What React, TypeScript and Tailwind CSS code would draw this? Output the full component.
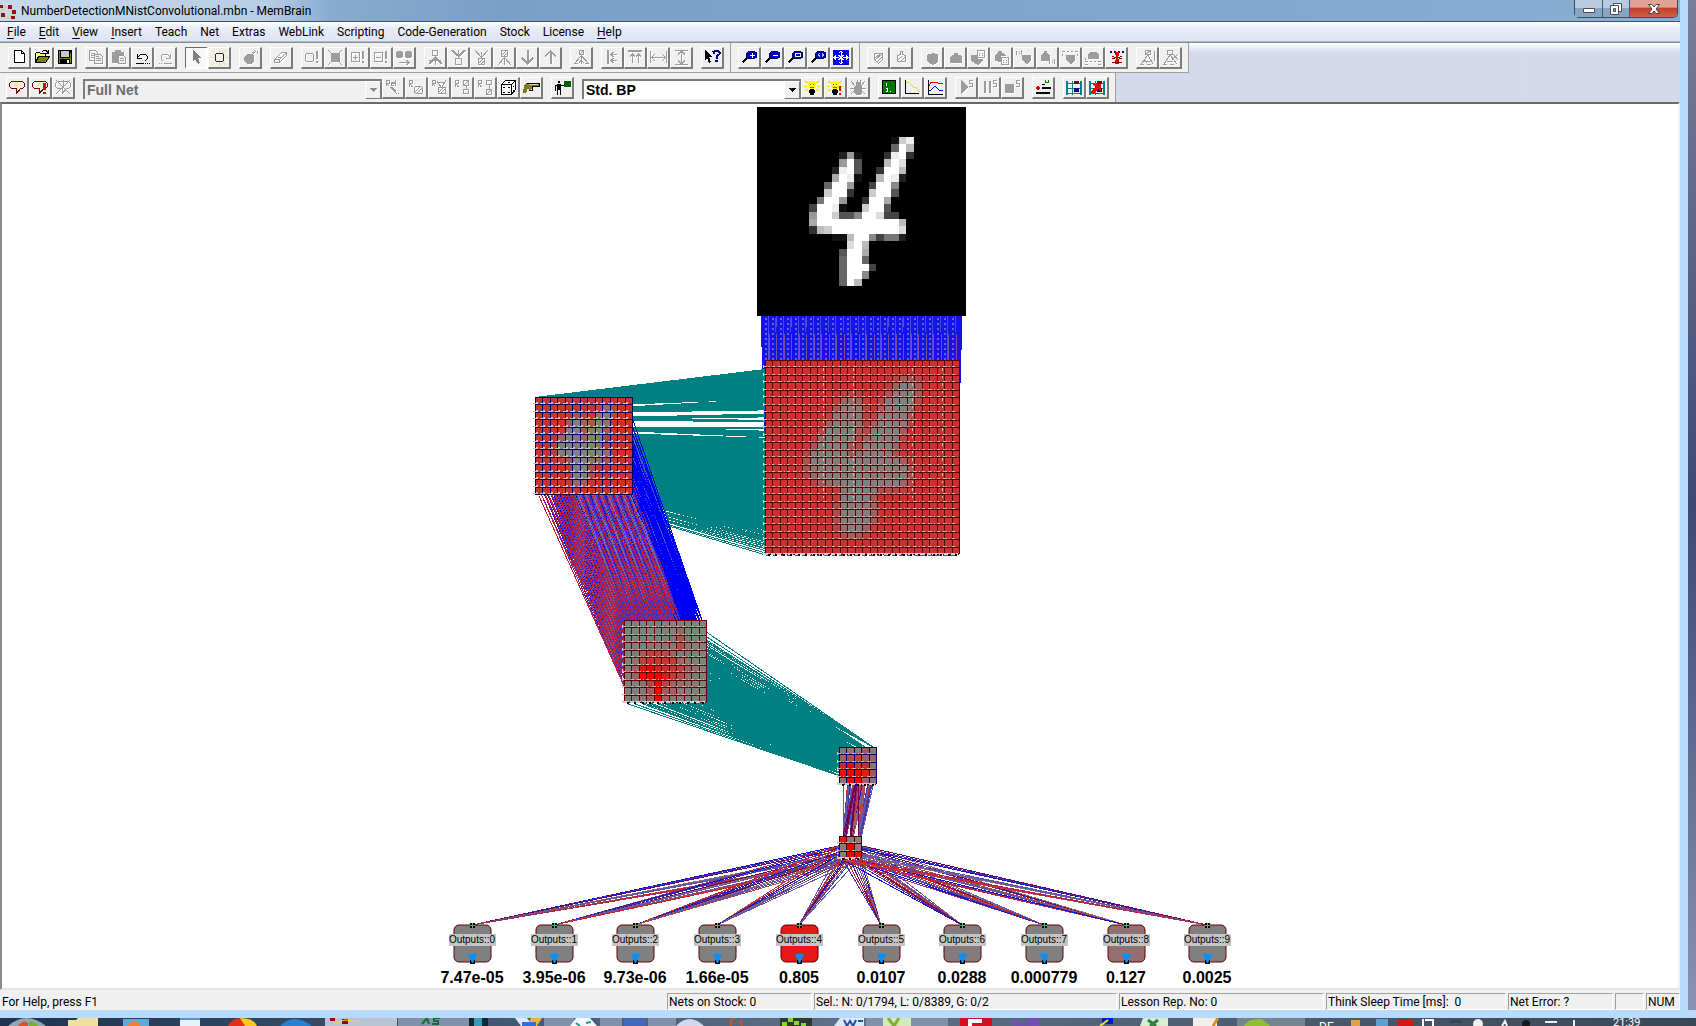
import React from "react";

type Shape = { d: string; s?: string; f?: string; w?: number };

const K = "#000000";
const G = "#9c9c9c";
const M = "#800000";
const Y = "#ffff00";
const B = "#0000e0";
const R = "#e00000";
const T = "#008080";

// s = stroked shape, f = filled shape
const s = (d: string, color = G, w = 1): Shape => ({ d, s: color, w });
const f = (d: string, color = G): Shape => ({ d, f: color });

const SHIELD = "M3 5l2-1h2l1-1h2l1 1h2l1 1v6l-3 3-2 1-2-1-4-3z";
const DOME = "M3 13V7l2-2h2V3h4v2h2l2 2v6z";
const LENS = [f("M6 2h2V1h6v1h2v6h-2v1H8V8H6z", "#0000c8"), s("M7.500 1.500h6l2 2v3l-2 2h-6l-2-2v-3z", "#000060"), s("M6 8l-4.500 4.500", K, 2)];
const BULB = [
	s("M1 1l3 2M15 1l-3 2M0 6h3M13 6h3M1 11l3-2M15 11l-3-2", "#e6e600"),
	f("M5 1h6v1h1v5l-2 2H6L4 7V2h1z", Y),
	s("M6.500 4v1M9.500 4v1M6 7.500h4", "#807000"),
	f("M6 9h4v1h1v3h-1v2H6v-2H5v-3h1z", K),
];
const BUBBLE = [s("M2.500 1.500h11l2 2v3l-2 2h-2l-4 5v-5h-5l-2-2v-3z", M), f("M6 3h3v3H6z", "#f4ee70")];
const FILM = [
	f("M0 1h2v14H0zM14 1h2v14h-2z", T),
	s("M2 3.500h12M2 8.500h12M2 13.500h12M6.500 1v14", T),
	f("M8 1h5v3H8z", M),
	f("M8 8h5v4H8z", "#000090"),
];

const icons: Record<string, Shape[]> = {
	New: [f("M3 0h8l3 3v10H3z", "#fff"), s("M3.500.5h7l3 3v9h-10zM10.500.5v3h3", K)],
	Open: [
		f("M1 3h4l1 1h5v3H1z", "#ffff60"),
		f("M4 7h12l-4 6H1z", "#808000"),
		s("M1.500 12.500v-9l1-1h3l1 1h5v3M1.500 12.500l3-6h11l-4 6zM8 1.500l2-1h2l2 2M14.500 0v3.500h-3", K),
	],
	Save: [f("M1 0h14v14H1z", K), f("M2 1h1v12H2zM13 3h1v10h-1zM3 8h10v1H3z", "#808000"), f("M4 1h8v6H4z", "#c8c8c8"), f("M10 10h2v3h-2z", "#fff")],
	Copy: [s("M1.500.5h6l2 2v8h-8zM3 3.500h4M3 5.500h4M3 7.500h3"), f("M6 4h6l3 3v7H6z", "#f0f0f0"), s("M6.500 4.500h6l2 2v7h-8zM8 8.500h5M8 10.500h5M8 6.500h3")],
	Paste: [f("M1 2h3V0h6v2h3v3H7v8H1z"), f("M7 5h5l3 3v6H7z", "#f0f0f0"), s("M7.500 5.500h5l2 2v6h-7zM9 8.500h4M9 10.500h4")],
	Undo: [s("M3.500 8V3.500M3 8.500h5M4 7l3-3h4l2 2v3l-2 2M2 13.500h8", K), s("M11 13.500h1M13 13.500h1M15 13.500h1", K)],
	Redo: [s("M13.500 8V3.500M14 8.500H9M13 7l-3-3H6L4 6v3l2 2M7 13.500h8"), s("M2 13.500h1M4 13.500h1")],
	Select: [f("M5 0l8 8h-3l2 5-2 1-3-5-2 2z", "#808080")],
	Neuron: [s("M1 0l3 3M15 0l-3 3M8.500 0v2M0 7.500h2M14 7.500h3M1 15l3-3M15 15l-3-3M8.500 13v3", "#f0e060"), s("M5.500 3.500h6l1 1v6l-1 1h-6l-1-1v-6z", M)],
	Bomb: [f("M4 5l2-1h4l2 2v5l-2 3H5l-3-3V7z"), s("M11 4l2-2M12 0l2 2M15 1v3M10 2h2")],
	Eraser: [s("M1.500 9.500l7-7h5l-7 7zM1.500 9.500v3h5v-3M6.500 12.500l7-7v-3M5 7l4 0")],
	SelectExtra: [s("M2.500 3.500h6l1 1v6l-1 1h-6l-1-1v-6z"), f("M12 1h2v8h-2zM12 11h2v2h-2z")],
	SelectAll: [f("M4 3h9v9H4z"), s("M1 0l4 4M15 0l-4 4M1 15l4-4M15 15l-4-4")],
	AddGroup: [s("M1.500 2.500h8v9h-8zM3 7.500h5M5.500 5v5"), f("M12 1h2v8h-2zM12 11h2v2h-2z")],
	SubGroup: [s("M1.500 2.500h8v9h-8zM3 7.500h5"), f("M12 1h2v8h-2zM12 11h2v2h-2z")],
	Replace: [f("M1 1h5v1h1v5H6v1H1V7H0V2h1zM10 1h5v1h1v5h-1v1h-5V7H9V2h1z"), s("M3 12.500h10M10.500 10l2.500 2.500-2.500 2.500")],
	ConnTo: [s("M5.500.5h5v5h-5zM8.500 6v9M2 10.500h12"), s("M8 8l-6 6M9 8l6 6", G, 2)],
	ConnFrom: [s("M5.500 8.500h6v6h-6zM8.500 0v8"), s("M2 0l6 6M15 0l-6 6", G, 2), f("M5 4h7l-3 4z")],
	DiscFrom: [s("M5.500 8.500h6v6h-6zM2 0l6 7M15 0l-6 7M8.500 2v6M6 13l4-4M8 14l3-3")],
	DiscTo: [s("M5.500.5h6v6h-6zM8.500 7v8M8 8l-6 7M9 8l6 7M6 5l4-4M8 6l3-3")],
	Down: [s("M3 8l5.500 5.500L14 8", G, 2), s("M9 0v13", G, 2)],
	Up: [s("M3 6.500L8.500 1 14 6.500", G, 2), s("M9 14V2", G, 2)],
	Parents: [s("M6.500.5h4v4h-4zM8.500 5v9M8 6l-6 7M9 6l6 7M1 13.500h4M12 13.500h4M5 9l3-3 4 4M6 13l2-3 3 3M7 4l3-3")],
	AlignLeft: [f("M3 0h2v14H3z"), s("M7 4.500h6M7 10.500h6M9.500 2L7 4.500 9.500 7M9.500 8L7 10.500l2.500 2.500")],
	AlignTop: [f("M1 0h14v2H1z"), s("M5.500 4v9M11.500 4v9M3 6.500L5.500 4 8 6.500M9 6.500L11.500 4 14 6.500")],
	SpaceH: [s("M.5 1v12M16.500 1v12M1 7.500h15M5 4L1.500 7.500 5 11M12 4l3.500 3.500L12 11")],
	SpaceV: [s("M2 .5h13M2 14.500h13M8.500 1v13M5 4.500l3.500-3.500L12 4.500M5 10.500l3.500 3.500 3.500-3.500")],
	WhatsThis: [f("M1 0l7 7H5l2 5-2 1-2-5-2 2z", K), s("M9.500 4V2l2-1.500h2l2 1.500v2l-3 2.500V9", "#000080", 2), f("M11 10h3v2h-3z", "#000080")],
	ZoomIn: [...LENS, s("M11 2.500v5M8.500 5h5", "#fff")],
	ZoomOut: [...LENS, s("M8.500 5h5", "#fff")],
	ZoomBox: [...LENS, s("M8.500 3.500h5v3h-5z", "#ffff90")],
	ZoomFit: [...LENS, s("M10 3L8.500 5l1.500 2M12 3l1.500 2L12 7", "#a0c0ff")],
	Pan: [f("M0 0h16v15H0z", "#0000f0"), s("M8 1v5M8 9v5M1 7.500h5M10 7.500h5M6 3l2-2 2 2M6 12l2 2 2-2M3 5.500l-2 2 2 2M13 5.500l2 2-2 2M5.500 5l5 5M10.500 5l-5 5", "#fff")],
	ShieldIn: [s("M4.500 3.500h8v6l-4 4-4-4zM5 8l5-4M5 10l7-6M7 12l5-5")],
	ShieldOut: [s("M4.500 5.500l3-1v-3h2v3l3 1v6h-8zM5 10l4-4M8 11l4-4")],
	Shield1: [f(SHIELD)],
	Dome1: [f(DOME)],
	Shield2: [f("M1 5h7v4h5v2l-5 4-7-4z"), s("M7.500.5h7v7h-7zM9 3h1M12 3h1M9 5.500h1M12 5.500h1")],
	Dome2: [f("M2 11V5l2-2h1V1h4v2h2l2 3H8v6z"), s("M8.500 7.500h7v7h-7zM10 10h1M13 10h1M10 12.500h1M13 12.500h1")],
	Shield3: [f("M6 5h9v5l-4 4-5-4z"), s("M.5 1v4M5.500 0v5M3 1.500h1M3 3.500h1")],
	Dome3: [f("M2 11V5l3-2V1h3v2l3 2v6z"), s("M10.500 9v5M15.500 9v5M13 10.500h1M13 12.500h1")],
	Shield4: [f("M4 5h9v5l-4 4-5-4z"), s("M0 1.500h3M5 1.500h2M9 1.500h2M13 1.500h3M.5 4v2M15.500 4v2")],
	Dome4: [f("M3 9V4l3-2h5l3 2v5z"), s("M0 11.500h3M5 11.500h2M9 11.500h2M13 11.500h3M0 14.500h3M13 14.500h3M.5 8v2")],
	Spider: [s("M2 1.500h2M6 1.500h2M10 1.500h2M14 1.500h2", "#000080", 2), f("M7 2h4v3l-1 1v3l1 1v4H7v-4l1-1V6L7 5z", R), s("M4 6l4 2M14 6l-4 2M4 12h10M4 9l3-1M14 9l-3-1", M)],
	Tree1: [s("M6.500.5h5v4h-5zM9 5l-7 9M9 5l5 9M5 11h6M1 14.500h4M8 14.500h4M15.500 1v10M5 9l3 4"), s("M7 4l4-3")],
	Tree2: [s("M5.500.5h5v4h-5zM8 5l-6 9M8 5l7 9M5 11h6M1 14.500h4M8 14.500h4M10 10l6-6M11 4l5 6")],
	Teach: BUBBLE,
	TeachNow: [...BUBBLE, f("M11 3h3v7h-3zM11 12h3v2h-3z", R)],
	TeachStop: [s("M2.500 1.500h11l2 2v3l-2 2h-2l-4 5v-5h-5l-2-2v-3zM1 0l14 14M15 0L1 14M8.500 0v8")],
	RelSet: [s("M1.500 6V.5h3v3h-3l3 3M6 3.500h3v-1H6v3h3M10.500 0v6"), f("M5 7h2l4 4v3l-6-6z"), s("M11 13.500h1M13 13.500h1")],
	RandSel: [s("M1.500 7V.5h3v3h-3l3 3.500M7.500 6.500h6l1 1v5l-1 1h-6l-1-1v-5zM7 12l5-5M9 13l5-5")],
	RandAll: [s("M1.500 6V.5h3v3h-3l3 3M7.500 7.500h7v6h-7zM6 1l4 6M15 0l-4 7M8 2h6M8 12l4-4M10 13l4-4")],
	RandA: [s("M1.500 7V.5h3v3h-3l3 3.500M9.500.5h5v5h-5zM12 6v3M9.500 9.500h5v4h-5zM10 5l4-4")],
	RandB: [s("M1.500 7V.5h3v3h-3l3 3.500M9.500.5h5v4h-5zM12 5v4M9.500 9.500h5v5h-5zM10 14l4-4")],
	Dice: [f("M1 4l4-4h11v10l-4 5H1z", "#fff"), s("M1.500 4.500h10v10h-10zM1.500 4.500l4-4h10l-4 4M15.500.5v9l-4 5", K), s("M3 7h2M8 7h2M3 12h2M8 12h2M8 2.500h2M13 6h1M13 10h1", K)],
	Gun: [f("M1 5l3-2h12v4h-6l-2 3H6L5 8l-2 5H0z", "#807820"), s("M4 3.500h12v3H9M9 7v3H6", K), f("M6 4h9v1H6z", "#d0d0d0")],
	Teacher: [f("M4 1h2v2H4zM3 4h4v6H3zM3 10h1v5H3zM6 10h1v5H6zM1 5h2v1H1zM1 6h1v5H1zM6 5h4v1H6z", K), f("M10 1h7v6h-7z", "#006000"), s("M10 4h1", K)],
	Think: BULB,
	ThinkNow: [...BULB, f("M12 6h2v5h-2zM12 13h2v2h-2z", R)],
	ThinkStop: [f("M6 2h5v3l1 2v6l-2 2H6l-2-2V7l2-2z"), s("M1 1l4 5M15 1l-4 5M0 8h16M1 14l4-4M15 14l-4-4M7 0v2M10 0v2")],
	Editor: [f("M1 0h14v14H1z", K), f("M2 1h12v12H2z", "#007800"), s("M5 3.500h1M5.500 3v3M5 8.500h2M6.500 8v3H5M9 11.500h1", "#fff")],
	ErrView: [s("M1.500 0v13.500H15", K), s("M2 2h3l2 2 2 3h3l2 4h2", "#e8e040")],
	Graph: [s("M1.500 0v14.500H16", K), s("M2 6l2-4h4l3 1h5", R), s("M2 10h2l4-4 4 4h4", B)],
	PlayS: [f("M3 0l7 7-7 7z"), s("M15 .5h-3.500v3h3v3h-3.500")],
	PauseS: [f("M3 1h2v12H3zM8 1h2v12H8z"), s("M16 .5h-3.500v3h3v3h-3.500")],
	StopS: [f("M1 4h9v9H1z"), s("M16 .5h-3.500v3h3v3h-3.500")],
	Record: [f("M7 7h9v2H7zM1 12h14v2H1zM7 4h3v1H7z", K), f("M2 6h2l1 2-1 2H2L1 8z", R), s("M10 2.500h4M10.500 0v2M13.500 0v3", "#008000")],
	Film: FILM,
	FilmStop: [...FILM, f("M1 12l5-5-3-3h9v8l-3-3-5 5z", "#f00000")],
};

const grayIcon = (name: string) => icons[name].every((p) => (p.s ?? p.f) === G || p.f === "#f0f0f0");

const ToolButton = ({ name, pressed }: { name: string; pressed?: boolean }) => (
	<button
		type="button"
		aria-label={name}
		className={`flex h-[22px] w-[23px] shrink-0 items-center justify-center border-r-2 border-b-2 border-t border-l ${
			pressed
				? "border-t-[#696969] border-l-[#696969] border-r-white border-b-white bg-[#f8f8f8]"
				: "border-t-white border-l-white border-r-[#7c7c7c] border-b-[#7c7c7c] bg-[#f0f0f0]"
		}`}
	>
		<svg
			width="17"
			height="16"
			shapeRendering="crispEdges"
			className={`shrink-0 ${grayIcon(name) ? "drop-shadow-[1px_1px_0_#fff]" : ""}`}
		>
			{icons[name].map((p, i) => (
				<path key={i} d={p.d} fill={p.f ?? "none"} stroke={p.s ?? "none"} strokeWidth={p.w} />
			))}
		</svg>
	</button>
);

const Group = ({ names, pressed }: { names: string[]; pressed?: string }) => (
	<div className="flex">
		{names.map((n) => (
			<ToolButton key={n} name={n} pressed={n === pressed} />
		))}
	</div>
);

const Combo = ({ label, value, disabled, width }: { label: string; value: string; disabled?: boolean; width: string }) => (
	<div
		className={`flex h-[20px] shrink-0 items-stretch border-t-2 border-l-2 border-r border-t-[#7c7c7c] border-l-[#7c7c7c] border-r-[#7c7c7c] ${width} ${
			disabled ? "bg-[#f0f0f0]" : "bg-white"
		}`}
	>
		<select
			aria-label={label}
			disabled={disabled}
			className={`min-w-0 flex-1 appearance-none pl-[2px] font-['Liberation_Sans',sans-serif] text-[14px] leading-[16px] font-bold opacity-100 outline-0 ${
				disabled ? "text-[#6d6d6d]" : "text-black"
			}`}
		>
			<option>{value}</option>
		</select>
		<span className="flex w-4 items-center justify-center border border-white border-r-[#7c7c7c] border-b-[#7c7c7c] bg-[#f0f0f0]">
			<svg width="7" height="4" shapeRendering="crispEdges">
				<path d="M0 0h7L3.500 4z" fill={disabled ? "#8c8c8c" : "#000"} />
			</svg>
		</span>
	</div>
);

const menu = ["File", "Edit", "View", "Insert", "Teach", "Net", "Extras", "WebLink", "Scripting", "Code-Generation", "Stock", "License", "Help"];
const underlined = ["File", "Edit", "View", "Insert", "Help"];

const toolbar1 = [
	["New", "Open", "Save"],
	["Copy", "Paste", "Undo", "Redo"],
	["Select", "Neuron"],
	["Bomb"],
	["Eraser"],
	["SelectExtra", "SelectAll", "AddGroup", "SubGroup", "Replace"],
	["ConnTo", "ConnFrom", "DiscFrom", "DiscTo", "Down", "Up"],
	["Parents"],
	["AlignLeft", "AlignTop", "SpaceH", "SpaceV"],
	["WhatsThis"],
];

/* ---------- network ---------- */

const CELL = 209 / 28;

// row -> runs of [first column, one hex digit per pixel]
const pixels: Record<number, [number, string][]> = {
	4: [[18, "1ce"]],
	5: [[18, "6fb"]],
	6: [[11, "291"], [17, "3ef3"]],
	7: [[11, "9f5"], [17, "bfd"]],
	8: [[10, "2ef5"], [16, "3ffb"]],
	9: [[10, "afe1"], [16, "bfe2"]],
	10: [[9, "6ff9"], [15, "4ff8"]],
	11: [[9, "cff3"], [15, "cff5"]],
	12: [[8, "7ff9"], [14, "3ffa"]],
	13: [[7, "4ffe1"], [14, "cff5"]],
	14: [[7, "9ffc558ffd44"]],
	15: [[7, "afffffffffffb"]],
	16: [[7, "3bcfffffffffd"]],
	17: [[10, "11bff84772"]],
	18: [[12, "dfb"]],
	19: [[11, "5ffa"]],
	20: [[11, "6ff6"]],
	21: [[11, "6fff4"]],
	22: [[11, "6ff8"]],
	23: [[11, "6fb"]],
};

const digit = Array.from({ length: 28 }, (_, r) => {
	const row = new Array(28).fill(0);
	(pixels[r] ?? []).forEach(([start, run]) => run.split("").forEach((c, i) => (row[start + i] = parseInt(c, 16) / 15)));
	return row as number[];
});

const average = (src: number[][], r: number, c: number, n: number, step: number) => {
	let sum = 0;
	for (let i = 0; i < n; i++) for (let j = 0; j < n; j++) sum += src[r * step + i][c * step + j];
	return sum / (n * n);
};
const square = (n: number, fn: (r: number, c: number) => number) =>
	Array.from({ length: n }, (_, r) => Array.from({ length: n }, (_, c) => fn(r, c)));
const fromHex = (rows: string[]) => rows.map((r) => r.split("").map((c) => parseInt(c, 16) / 15));

const conv1 = square(26, (r, c) => Math.max(0, 0.62 * (1 - 2.6 * average(digit, r, c, 3, 1))));
const pool1 = square(13, (r, c) => average(conv1, r, c, 2, 2));
const conv2 = fromHex([
	"00000000000",
	"00000003000",
	"00000015100",
	"00011116100",
	"01477631100",
	"01799982100",
	"03dfba97310",
	"03fffc86210",
	"0017f732110",
	"0014f430000",
	"0013f310000",
]);
const pool2 = fromHex(["11151", "46743", "bf9a1", "dffb5", "1ff42"]);
const hidden = fromHex(["c00", "0f0", "0fe"]);

type Layer = { x: number; y: number; n: number; cells: number[][]; line: string };
const L0: Layer = { x: 757, y: 107, n: 28, cells: digit, line: "" };
const L1: Layer = { x: 765, y: 360, n: 26, cells: conv1, line: "#600000" };
const L2: Layer = { x: 535, y: 397, n: 13, cells: pool1, line: "#000060" };
const L3: Layer = { x: 624, y: 620, n: 11, cells: conv2, line: "#700000" };
const L4: Layer = { x: 839, y: 747, n: 5, cells: pool2, line: "#000060" };
const L5: Layer = { x: 839, y: 836, n: 3, cells: hidden, line: "#500000" };

const at = (v: number) => Math.round(v * CELL);
// activation 0 is gray, 1 is pure red
const heat = (v: number) => {
	const low = Math.round(128 * (1 - v));
	return `rgb(${Math.round(128 + 127 * Math.min(1, v * 0.95))},${low},${low})`;
};

// link from the connector below one neuron to the top of another
const link = (a: Layer, ar: number, ac: number, b: Layer, br: number, bc: number) =>
	`M${a.x + at(ac + 0.5)} ${a.y + at(ar + 1) + 2}L${b.x + at(bc + 0.5)} ${b.y + at(br)}`;

const links = (a: Layer, b: Layer, size: number, step: number, keep: (k: number, r: number, c: number) => boolean = () => true) => {
	let d = "";
	for (let r = 0; r < b.n; r++)
		for (let c = 0; c < b.n; c++)
			for (let k = 0; k < size * size; k++)
				if (keep(k, r, c)) d += link(a, r * step + Math.floor(k / size), c * step + (k % size), b, r, c);
	return d;
};

const kernel1 = ["#1414e8", "#5a5ad8", "#1414e8", "#7a50b0", "#1414e8", "#1010c0", "#1414e8", "#5050e0", "#1414e8"];
const kernel2 = ["#0000ff", "#6a6ae0", "#c02040", "#5a30a8", "#7a6aa0", "#1c1ce8", "#d01830", "#903060", "#6030a0"];
const mixed = ["#1010d0", "#d02020", "#6a50a0", "#8c6a78", "#3838b8", "#a03060", "#b04848", "#5c5cae", "#700058"];

const LayerGrid = ({ layer, ticks }: { layer: Layer; ticks?: boolean }) => {
	const { x, y, n, cells, line } = layer;
	const end = at(n);
	const steps = Array.from({ length: n + 1 }, (_, i) => at(i));
	return (
		<g>
			{cells.map((row, r) =>
				row.map((v, c) => (
					<rect key={`${r}-${c}`} x={x + at(c)} y={y + at(r)} width={at(c + 1) - at(c)} height={at(r + 1) - at(r)} fill={heat(v)} />
				))
			)}
			<path
				d={steps.map((p) => `M${x + p + 0.5} ${y}v${end}M${x} ${y + p + 0.5}h${end}`).join("")}
				stroke={line}
				fill="none"
			/>
			{ticks ? (
				<g>
					<path
						d={steps.slice(0, n).map((p) => steps.slice(1).map((q) => `M${x + p - 2} ${y + q - 1}h3v-1h2v2h-5z`).join("")).join("")}
						fill="#c4c4c4"
					/>
					<path d={steps.slice(0, n).map((p) => steps.map((q) => `M${x + p + 3} ${y + q}h2v1h-2z`).join("")).join("")} fill="#101010" />
				</g>
			) : (
				steps.slice(1).map((p, i) => (
					<g key={p} fill="none">
						<path d={`M${x - 2} ${y + p - 0.5}h${end}`} stroke="#d0b8a8" strokeDasharray="4 2 1 2 3 3" />
						<path d={`M${x} ${y + p + 0.5}h${end}`} stroke="#101010" strokeDasharray="1 6 2 6" strokeDashoffset={i % 3} />
						<path d={`M${x + 3} ${y + p - 0.5}h${end - 3}`} stroke="#40a070" strokeDasharray="1 14" strokeDashoffset={i * 3} />
						<path d={`M${x - 1.5} ${y + p - 2}v3`} stroke="#d0d0d0" />
					</g>
				))
			)}
			{n === 26 && (
				<path
					d={[8, 12, 20, 24].map((c) => `M${x + at(c) - 1.5} ${y + 8}v${end - 60}`).join("")}
					stroke="#d8c0a8"
					strokeDasharray="3 5 2 5"
				/>
			)}
			{n !== 13 && <path d={`M${x - 1} ${y + end}h${end}`} stroke="#d0d0d0" strokeWidth="2" strokeDasharray="5 2 4 1" />}
			{n !== 13 && <path d={`M${x + 3} ${y + end + 1}h${end - 3}`} stroke="#000" strokeWidth="2" strokeDasharray="2 5 2 6" />}
		</g>
	);
};

const outputs = [
	{ value: "7.47e-05", fill: "#808080" },
	{ value: "3.95e-06", fill: "#808080" },
	{ value: "9.73e-06", fill: "#808080" },
	{ value: "1.66e-05", fill: "#808080" },
	{ value: "0.805", fill: "#e61818" },
	{ value: "0.0107", fill: "#827e7e" },
	{ value: "0.0288", fill: "#847c7c" },
	{ value: "0.000779", fill: "#808080" },
	{ value: "0.127", fill: "#907070" },
	{ value: "0.0025", fill: "#808080" },
];
const outX = (i: number) => Math.round(472 + i * 81.7);
const columns = Array.from({ length: 26 }, (_, c) => L1.x + at(c));

const Network = () => (
	<svg className="block h-full w-full" aria-label="Neural network">
		<g transform="translate(-2 -104)" shapeRendering="crispEdges">
			{kernel1.map((color, k) => (
				<path key={k} d={links(L0, L1, 3, 1, (i) => i === k)} stroke={color} fill="none" />
			))}
			<path d={columns.map((x) => `M${x + 1} 318V360`).join("")} stroke="#6464dc" strokeWidth="2" strokeDasharray="2 3" />
			<path d={columns.map((x) => `M${x + 4.5} 334V360`).join("")} stroke="#7c4c9c" />
			<path d={columns.map((x) => `M${x + 3.5} 318v14`).join("")} stroke="#4646e0" />
			<path d={links(L1, L2, 2, 2)} stroke={T} fill="none" />
			{Array.from({ length: 11 }, (_, r) => 10 - r).map((r) =>
				kernel2.map((color, k) => (
					<g key={`${r}-${k}`} fill="none">
						<path d={links(L2, L3, 3, 1, (i, row, col) => i === k && row === r && col < 8)} stroke={color} />
						<path d={links(L2, L3, 3, 1, (i, row, col) => i === k && row === r && col >= 8)} stroke={k === 1 ? "#5050e8" : "#0000f4"} />
					</g>
				))
			)}
			<path d={links(L3, L4, 3, 2)} stroke={T} fill="none" />
			{mixed.map((color, k) => (
				<path key={color} d={links(L4, L5, 3, 1, (i, r, c) => (i + r * 3 + c) % 9 === k)} stroke={color} fill="none" />
			))}
			{outputs.map((_, o) =>
				Array.from({ length: 9 }, (_, k) => (
					<path
						key={`${o}-${k}`}
						d={`M${L5.x + at((k % 3) + 0.5)} ${L5.y + at(Math.floor(k / 3) + 1) + 2}L${outX(o)} 925`}
						stroke={mixed[(k * 4 + o * 5) % 9]}
						fill="none"
					/>
				))
			)}
			<rect x="757" y="107" width="209" height="209" fill="#000" />
			{digit.map((row, r) =>
				row.map((v, c) => {
					if (!v) return null;
					const level = Math.round(v * 255);
					return (
						<rect key={`${r}-${c}`} x={757 + at(c)} y={107 + at(r)} width={at(c + 1) - at(c)} height={at(r + 1) - at(r)} fill={`rgb(${level},${level},${level})`} />
					);
				})
			)}
			<LayerGrid layer={L1} />
			<LayerGrid layer={L2} ticks />
			<LayerGrid layer={L3} />
			<LayerGrid layer={L4} />
			<LayerGrid layer={L5} />
			{outputs.map((o, i) => {
				const x = outX(i);
				return (
					<g key={i}>
						<rect x={x - 18} y="925" width="37" height="37" rx="5" fill={o.fill} stroke="#600000" shapeRendering="auto" />
						<path d={`M${x - 2} 923h5v5h-5z`} fill="#000" />
						<path d={`M${x + 0.5} 923v5M${x - 2} 925.500h5`} stroke="#30c070" />
						<path d={`M${x - 2} 960h5v4h-5z`} fill="#000" />
						<path d={`M${x - 4} 954h9l-4 9h-1z`} fill="#0090ff" shapeRendering="auto" />
						<rect x={x - 23} y="934" width="47" height="12" fill="#c4c4c4" />
						<text x={x} y="943" textAnchor="middle" className="fill-black font-['Liberation_Sans',sans-serif] text-[10px]">
							Outputs::{i}
						</text>
						<text x={x} y="983" textAnchor="middle" className="fill-black font-['Liberation_Sans',sans-serif] text-[16px] font-bold">
							{o.value}
						</text>
					</g>
				);
			})}
		</g>
	</svg>
);

const Taskbar = () => (
	<div className="h-2 overflow-hidden bg-linear-to-r from-[#1f3350] via-[#5d7288] to-[#3a4656]">
		<svg className="block h-2 w-full">
			<path d="M8 8q18-16 38 0z" fill="#8fa6b4" />
			<path d="M18 8q6-7 10-3v3z" fill="#e05020" />
			<path d="M29 8V4q6-1 9 4z" fill="#7ab030" />
			<path d="M68 8V2h8l2-2h20v8z" fill="#f0e0a0" />
			<path d="M123 1h26v7h-26z" fill="#5fa8d8" />
			<circle cx="134" cy="9" r="6" fill="#f08030" />
			<path d="M180 0h20v8h-20z" fill="#e8f0f8" />
			<path d="M180 0h20v2h-20z" fill="#5a90c8" />
			<path d="M228 8q4-8 14-8l6 8z" fill="#e03018" />
			<path d="M240 0q14 0 17 8h-12z" fill="#ffc820" />
			<path d="M280 8q14-14 32 0z" fill="#2c80d0" />
			<path d="M325 0h72v8h-72z" fill="#b8c4d4" />
			<path d="M330 0h5v3h-5zM342 1h6v5h-6z" fill="#a00000" />
			<path d="M333 6l12-4 16 2" stroke="#f0e020" fill="none" />
			<path d="M398 0h72v8h-72zM544 0h30v8h-30zM600 0h22v8h-22zM648 0h28v8h-28zM866 0h82v8h-82z" fill="#7f92aa" />
			<path d="M422 6l5-6 2 6M440 0h-6v3h4v3h-6" stroke="#107030" strokeWidth="2" fill="none" />
			<path d="M469 0h19v8h-19z" fill="#102838" />
			<path d="M474 0h8v8h-8z" fill="#3a98b8" />
			<path d="M515 0h12l6 8h-12z" fill="#dfe9ff" />
			<path d="M527 8l4-8h11l-5 8z" fill="#f0b030" />
			<path d="M522 4h14v4h-14z" fill="#2a70e0" />
			<path d="M570 8l6-8h14l7 8z" fill="#f4f8fa" />
			<path d="M576 5l4 3M586 5l5-1" stroke="#18a090" strokeWidth="2" />
			<path d="M624 0h22v8h-22z" fill="#4468b8" />
			<path d="M676 8q13-14 28 0z" fill="#d4d8ec" />
			<path d="M731 8V2l4-2M742 8l-2-6" stroke="#d05020" strokeWidth="2" fill="none" />
			<path d="M780 0h32v8h-32z" fill="#303830" />
			<path d="M782 6h5M788 2h5M794 5h5M801 7h5" stroke="#80e020" strokeWidth="4" />
			<path d="M840 0h24v8h-30z" fill="#dce8f8" />
			<path d="M844 2l3 6 3-5 3 5 3-6M858 3h5" stroke="#2050a0" strokeWidth="2" fill="none" />
			<path d="M883 0h28v8h-28z" fill="#d8e8b8" />
			<path d="M888 0l6 8 5-8" stroke="#80b030" strokeWidth="3" fill="none" />
			<path d="M960 0h32v8h-32z" fill="#d01020" />
			<path d="M970 8V3h12" stroke="#fff" strokeWidth="4" fill="none" />
			<path d="M1011 4l6-3 8 7 2-8h13v8h-26z" fill="#7050b0" />
			<path d="M1102 0h11v6h-11z" fill="#0018d0" />
			<path d="M1100 8l8-6" stroke="#f0e020" strokeWidth="2" />
			<path d="M1143 0h25v8h-28z" fill="#d8ecd0" />
			<path d="M1148 2l8 6M1158 2l-8 6" stroke="#308040" strokeWidth="3" />
			<path d="M1193 0h24v8h-24z" fill="#f0f0e8" />
			<path d="M1213 8l5-8" stroke="#e09020" strokeWidth="3" />
			<path d="M1237 0h68v8h-68z" fill="#75848f" />
			<path d="M1244 8q4-8 18-7l8 7z" fill="#90c030" />
			<text x="1319" y="13" className="fill-white font-['Roboto',sans-serif] text-[12px]">DE</text>
			<path d="M1351 2h9v6h-9z" fill="#e0a050" />
			<path d="M1376 1h12v7h-12z" fill="#60a0d0" />
			<path d="M1398 1h16v7h-16z" fill="#d01818" />
			<path d="M1423 1v7M1425 2h8v6" stroke="#fff" strokeWidth="2" fill="none" />
			<path d="M1450 2h12v3h-12z" fill="#38405a" />
			<circle cx="1478" cy="6" r="5" fill="#f0f0f0" />
			<path d="M1502 8l3-5 2 5M1545 4h12M1574 8V2" stroke="#f0f0f0" strokeWidth="2" fill="none" />
			<circle cx="1526" cy="6" r="4" fill="#181818" />
			<text x="1613" y="8" className="fill-white font-['Roboto',sans-serif] text-[11px]">21:39</text>
		</svg>
	</div>
);

const Pane = ({ text, width }: { text: string; width: string }) => (
	<div className={`h-[17px] shrink-0 overflow-hidden border border-t-[#a0a0a0] border-l-[#a0a0a0] border-r-white border-b-white pl-px leading-[16px] whitespace-pre ${width}`}>
		{text}
	</div>
);

const App = () => {
	return (
		<div className="flex h-screen flex-col overflow-hidden bg-[#b8dafd] font-['Roboto',sans-serif] text-[12px] text-black select-none">
			<div className="flex min-h-0 flex-1">
				<div className="flex min-w-0 flex-1 flex-col">
					{/* title bar */}
					<header className="flex h-[22px] shrink-0 items-start justify-between border-b border-[#40506a] bg-linear-to-r from-[#a4c0de] from-0% via-[#7a9fc8] via-30% to-[#88aed4]">
						<div className="flex h-[21px] min-w-0 items-center gap-[5px] rounded-r-full bg-linear-to-r from-[#c6d9ec] via-[#b8cee6] via-80% to-transparent pr-5">
							<svg width="16" height="20">
								<path d="M2 5l8 2 4 6-6 4-6-3z" stroke="#e8c850" fill="none" />
								<path d="M0 4h3v3H0zM8 4h4v4H8zM12 9h4v4h-4zM1 12h4v4H1zM11 15h4v3h-4z" fill="#9a1010" />
							</svg>
							<h1 className="truncate">NumberDetectionMNistConvolutional.mbn - MemBrain</h1>
						</div>
						<div className="mr-[2px] flex h-[18px] shrink-0 rounded-b-[5px] border border-t-0 border-[#3c4c60]">
							<button type="button" aria-label="Minimize" className="flex w-7 items-center justify-center border-r border-[#4a5c74] bg-linear-to-b from-[#b8cade] from-50% to-[#8ba4c0] to-50% pt-1">
								<svg width="12" height="5"><path d="M.5.5h11v4H.5z" fill="#fff" stroke="#48505c" /></svg>
							</button>
							<button type="button" aria-label="Restore" className="flex w-[27px] items-center justify-center border-r border-[#4a5c74] bg-linear-to-b from-[#b8cade] from-50% to-[#8ba4c0] to-50%">
								<svg width="12" height="12">
									<path d="M3.500.5h8v8h-8z" fill="#fff" stroke="#48505c" />
									<path d="M.5 2.500h8v9h-8z" fill="#fff" stroke="#48505c" />
									<path d="M3.500 5.500h2v3h-2z" fill="#8ba4c0" stroke="#48505c" />
								</svg>
							</button>
							<button type="button" aria-label="Close" className="flex w-[47px] items-center justify-center rounded-br-[4px] bg-linear-to-b from-[#e0a294] from-40% via-[#c04028] via-50% to-[#d06048]">
								<svg width="12" height="10">
									<path d="M.5.5h3.500L6 3 8 .5h3.500L8 5l3.500 4.500H8L6 7 4 9.500H.5L4 5z" fill="#fff" stroke="#4a4048" />
								</svg>
							</button>
						</div>
					</header>

					{/* menu */}
					<nav className="flex h-[20px] shrink-0 items-center gap-[13px] border-b border-[#b4b8c8] bg-linear-to-b from-white from-0% via-[#e8ecf6] via-35% to-[#dfe4f4] pl-[7px]">
						{menu.map((item) => (
							<button type="button" key={item} className="leading-[18px]">
								{underlined.includes(item) ? (
									<>
										<span className="underline underline-offset-2">{item[0]}</span>
										{item.slice(1)}
									</>
								) : (
									item
								)}
							</button>
						))}
					</nav>

					{/* toolbars */}
					<div className="flex h-[60px] shrink-0 flex-col items-start border-t border-[#8c8c94] bg-linear-to-b from-white from-0% via-[#d4d9ec] via-17% to-[#d4d9ec]">
						<div className="flex h-[30px] border-r border-b border-[#a0a0a0] bg-[#f0f0f0]">
							<div className="flex items-center gap-2 border-r border-[#a0a0a0] pt-px pr-[6px] pl-2">
								{toolbar1.map((names) => (
									<Group key={names[0]} names={names} pressed="Select" />
								))}
							</div>
							<div className="flex items-center border-r border-[#a0a0a0] pt-px pr-[6px] pl-[7px]">
								<Group names={["ZoomIn", "ZoomOut", "ZoomBox", "ZoomFit", "Pan"]} />
							</div>
							<div className="flex items-center gap-2 pt-px pr-[6px] pl-[7px]">
								<Group names={["ShieldIn", "ShieldOut"]} />
								<Group names={["Shield1", "Dome1", "Shield2", "Dome2", "Shield3", "Dome3", "Shield4", "Dome4", "Spider"]} />
								<Group names={["Tree1", "Tree2"]} />
							</div>
						</div>
						<div className="flex h-[29px] items-center gap-2 border-r border-[#a0a0a0] bg-[#f0f0f0] pt-px pr-[6px] pl-[6px]">
							<Group names={["Teach", "TeachNow", "TeachStop"]} />
							<div className="flex items-end">
								<Combo label="Net selection" value="Full Net" disabled width="w-[299px]" />
								<Group names={["RelSet", "RandSel", "RandAll", "RandA", "RandB", "Dice", "Gun"]} />
							</div>
							<Group names={["Teacher"]} />
							<div className="flex items-end">
								<Combo label="Teacher" value="Std. BP" width="w-[219px]" />
								<Group names={["Think", "ThinkNow", "ThinkStop"]} />
							</div>
							<Group names={["Editor", "ErrView", "Graph"]} />
							<Group names={["PlayS", "PauseS", "StopS"]} />
							<Group names={["Record"]} />
							<Group names={["Film", "FilmStop"]} />
						</div>
					</div>

					<main className="min-h-0 flex-1 overflow-hidden border-2 border-t-[#696969] border-l-[#8c8c8c] border-r-[#f0f0f0] border-b-[#e3e3e3] bg-white">
						<Network />
					</main>

					<footer className="flex h-[20px] shrink-0 items-end gap-[2px] bg-[#f0f0f0]">
						<div className="min-w-0 flex-1 truncate pl-[2px] leading-[16px]">For Help, press F1</div>
						<Pane text="Nets on Stock: 0" width="w-[145px]" />
						<Pane text="Sel.: N: 0/1794, L: 0/8389, G: 0/2" width="w-[303px]" />
						<Pane text="Lesson Rep. No: 0" width="w-[205px]" />
						<Pane text="Think Sleep Time [ms]:  0" width="w-[180px]" />
						<Pane text="Net Error: ?" width="w-[105px]" />
						<Pane text="" width="w-[29px]" />
						<Pane text="NUM" width="w-[34px]" />
					</footer>
				</div>
				<div className="w-2 shrink-0 bg-[#b8dafd]" />
				<div className="w-2 shrink-0 bg-linear-to-b from-[#7a7f98] via-[#3c4a72] to-[#8a94b0]" />
			</div>
			<div className="mr-2 h-2 shrink-0 bg-[#b8dafd]" />
			<Taskbar />
		</div>
	);
};

export default App;
